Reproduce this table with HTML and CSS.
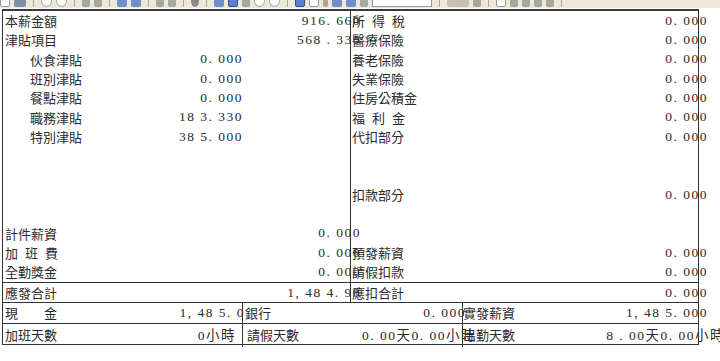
FILE: index.html
```html
<!DOCTYPE html>
<html lang="zh-Hant">
<head>
<meta charset="utf-8">
<title>薪資單</title>
<link rel="stylesheet" href="styles.css">
</head>
<body>
<div class="toolbar">
  <span class="ic doc"></span><span class="ic prn"></span><span class="sep"></span>
  <span class="ic rnd"></span><span class="ic rnd"></span><span class="sep"></span>
  <span class="ic gry"></span><span class="ic gry"></span><span class="sep"></span>
  <span class="ic blu"></span><span class="ic blu"></span><span class="sep"></span>
  <span class="ic gry"></span><span class="ic gry"></span><span class="sep"></span>
  <span class="ic mag"></span><span class="sep"></span>
  <span class="ic blu"></span><span class="ic sel"></span>
  <span class="ic gry"></span><span class="ic rnd"></span><span class="ic rnd"></span><span class="sep"></span>
  <span class="ic sel"></span><span class="ic doc"></span><span class="ic gry small"></span><span class="ic blu"></span><span class="ic blu"></span><span class="ic gry"></span>
  <span class="field"></span><span class="sep"></span>
  <span class="ic gry wide"></span><span class="ic gry"></span><span class="sep"></span>
  <span class="ic doc"></span><span class="ic gry"></span><span class="ic gry"></span><span class="ic gry"></span><span class="ic gry"></span><span class="sep"></span>
</div>

<div class="sheet">
  <div class="upper">
    <div class="col lcol">
      <div class="row"><span class="lab">本薪金額</span><span class="val">916. 660</span></div>
      <div class="row"><span class="lab">津貼項目</span><span class="val">568 . 330</span></div>
      <div class="row"><span class="lab sub">伙食津貼</span><span class="val subv">0. 000</span></div>
      <div class="row"><span class="lab sub">班別津貼</span><span class="val subv">0. 000</span></div>
      <div class="row"><span class="lab sub">餐點津貼</span><span class="val subv">0. 000</span></div>
      <div class="row"><span class="lab sub">職務津貼</span><span class="val subv">18 3. 330</span></div>
      <div class="row"><span class="lab sub">特別津貼</span><span class="val subv">38 5. 000</span></div>
      <div class="row"></div>
      <div class="row"></div>
      <div class="row"></div>
      <div class="row"></div>
      <div class="row"><span class="lab">計件薪資</span><span class="val">0. 000</span></div>
      <div class="row"><span class="lab spaced">加班費</span><span class="val">0. 000</span></div>
      <div class="row"><span class="lab">全勤獎金</span><span class="val">0. 000</span></div>
    </div>
    <div class="col rcol">
      <div class="row"><span class="lab spaced">所得稅</span><span class="val">0. 000</span></div>
      <div class="row"><span class="lab">醫療保險</span><span class="val">0. 000</span></div>
      <div class="row"><span class="lab">養老保險</span><span class="val">0. 000</span></div>
      <div class="row"><span class="lab">失業保險</span><span class="val">0. 000</span></div>
      <div class="row"><span class="lab">住房公積金</span><span class="val">0. 000</span></div>
      <div class="row"><span class="lab spaced">福利金</span><span class="val">0. 000</span></div>
      <div class="row"><span class="lab">代扣部分</span><span class="val">0. 000</span></div>
      <div class="row"></div>
      <div class="row"></div>
      <div class="row"><span class="lab">扣款部分</span><span class="val">0. 000</span></div>
      <div class="row"></div>
      <div class="row"></div>
      <div class="row"><span class="lab">預發薪資</span><span class="val">0. 000</span></div>
      <div class="row"><span class="lab">請假扣款</span><span class="val">0. 000</span></div>
    </div>
  </div>

  <div class="totals">
    <div class="cell tl"><span class="lab">應發合計</span><span class="val">1, 48 4. 90</span></div>
    <div class="cell tr"><span class="lab">應扣合計</span><span class="val">0. 000</span></div>
  </div>

  <div class="brow r1">
    <div class="cell c1"><span class="lab">現　　金</span><span class="val v1">1, 48 5. 0</span></div>
    <div class="cell c2"><span class="lab bank">銀行</span><span class="val v2">0. 000</span></div>
    <div class="cell c3"><span class="lab">實發薪資</span><span class="val v3">1, 48 5. 000</span></div>
  </div>
  <div class="brow r2">
    <div class="cell c1"><span class="lab">加班天數</span><span class="val w1">0小時</span></div>
    <div class="cell c2"><span class="lab ind">請假天數</span><span class="val w2">0. 00天0. 00小時</span></div>
    <div class="cell c3"><span class="lab">出勤天數</span><span class="val w3">8 . 00天0. 00小時</span></div>
  </div>
</div>
</body>
</html>
```

FILE: styles.css
```css
* { box-sizing: border-box; }

html, body {
  margin: 0;
  padding: 0;
  background: #fff;
}

body {
  width: 720px;
  height: 361px;
  overflow: hidden;
  font-family: "Noto Sans CJK TC", "Noto Sans CJK SC", sans-serif;
  font-size: 13px;
  color: #2b2b2b;
}

/* ---------- toolbar strip ---------- */
.toolbar {
  height: 8px;
  background: #ece9d8;
  display: flex;
  align-items: flex-end;
  overflow: hidden;
  padding: 0 0 1px 0;
  gap: 4px;
}

.ic {
  flex: none;
  width: 10px;
  height: 12px;
  border-radius: 2px;
  background: #b9b6a8;
}
.ic.doc { background: #fff; border: 1px solid #9a9a9a; }
.ic.prn { background: #7f8fa8; width: 12px; }
.ic.rnd { background: #fff; border: 1px solid #a8a8a8; border-radius: 50%; width: 11px; }
.ic.gry { background: #a9a79c; width: 8px; }
.ic.gry.small { width: 5px; }
.ic.gry.wide { width: 22px; background: #c4c1b3; }
.ic.blu { background: #6f8fc6; }
.ic.sel { background: #5b7fd0; border: 1px solid #2d4f9c; }
.ic.mag { background: #8a8a8a; width: 8px; border-radius: 50%; }

.sep {
  flex: none;
  width: 1px;
  height: 8px;
  background: #aca899;
  margin: 0 3px;
}

.field {
  flex: none;
  width: 60px;
  height: 12px;
  background: #fff;
  border: 1px solid #7f9db9;
}

/* ---------- report sheet ---------- */
.sheet {
  margin: 1px 0 0 2px;
  width: 697px;
  border: 1px solid #333;
  border-top: 2px solid #3a3a3a;
}

.upper {
  display: grid;
  grid-template-columns: 348px 1fr;
  height: 271px;
}

.col {
  display: flex;
  flex-direction: column;
}

.lcol { border-right: 1px solid #333; }

.row {
  height: 19.33px;
  flex: none;
  display: flex;
  align-items: center;
  white-space: nowrap;
}

.lab {
  padding-left: 2px;
  white-space: pre;
}
.lab.sub { padding-left: 27px; }
.lab.spaced { letter-spacing: 7px; }
.rcol .lab { padding-left: 1px; }

.val {
  margin-left: auto;
  white-space: pre;
  font-family: "Liberation Serif", "Noto Sans CJK TC", serif;
  font-size: 13.5px;
  letter-spacing: 1.5px;
}
.lcol .val { margin-right: -11px; }
.rcol .val { margin-right: -10px; }
.lcol .val.subv { margin-right: 107px; }

/* totals row */
.totals {
  display: grid;
  grid-template-columns: 348px 1fr;
  border-top: 1px solid #333;
  border-bottom: 1px solid #333;
  height: 21px;
}

.cell {
  display: flex;
  align-items: center;
  white-space: nowrap;
  min-width: 0;
  padding-bottom: 1px;
}

.tl { border-right: 1px solid #333; }
.tl .val { margin-right: -11px; }
.tr .lab { padding-left: 1px; }
.tr .val { margin-right: -10px; }

/* bottom rows */
.brow {
  display: grid;
  grid-template-columns: 240px 220px 1fr;
}
.brow.r1 { height: 21px; border-bottom: 1px solid #333; }
.brow.r2 { height: 20px; }
.brow .cell { padding-bottom: 2px; }
.brow.r2 .cell { padding-bottom: 3px; }

.c1, .c2 { border-right: 1px solid #333; }
.c2 .lab, .c3 .lab { padding-left: 0; }
.c2 .lab.bank { padding-left: 2px; }
.c2 .lab.ind { padding-left: 4px; }

.v1 { margin-right: -3px; }
.v2 { margin-right: -4px; }
.v3 { margin-right: -10px; }
.w1 { margin-right: 6px; }
.w2 { margin-right: -14px; }
.w3 { margin-right: -27px; }
```
